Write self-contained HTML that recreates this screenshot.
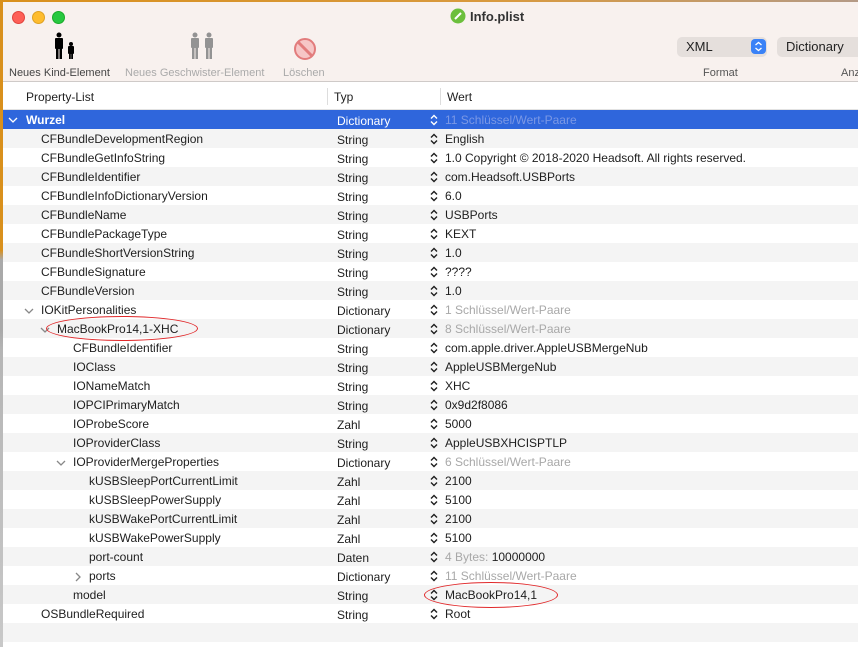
<!DOCTYPE html>
<html><head><meta charset="utf-8"><style>
*{margin:0;padding:0;box-sizing:border-box}
body{width:858px;height:647px;overflow:hidden;font-family:"Liberation Sans",Helvetica,Arial,sans-serif;font-size:12px;color:#1e1e1e;background:#fff;position:relative}
.edge{position:absolute;left:0;top:0;width:3px;height:647px;background:linear-gradient(#d9901c 0,#d9901c 250px,#a9a9a9 260px,#a9a9a9 330px,#b5b5b5 350px,#c8c8c8 647px)}
.topedge{position:absolute;left:0;top:0;width:858px;height:2px;background:linear-gradient(90deg,#d9901c,#d89a40 60%,#b49a86)}
.tb{position:absolute;left:3px;top:2px;width:855px;height:80px;background:#f8f1ee;border-bottom:1px solid #cfcac8}
.light{position:absolute;top:9px;width:13px;height:13px;border-radius:50%}
.title{position:absolute;top:7px;font-weight:bold;font-size:13px;color:#333}
.tl{position:absolute;top:65px;font-size:11px;color:#555}
.pop{position:absolute;top:35px;height:20px;background:#e5dfdc;border-radius:5px;font-size:13px;padding:2px 0 0 9px;color:#222}
.hdr{position:absolute;left:3px;top:83px;width:855px;height:27px;background:#fff;border-bottom:1px solid #e2e2e2}
.hdr span{position:absolute;top:7px;font-size:12px}
.hdr i{position:absolute;top:5px;width:1px;height:17px;background:#ddd}
.rows{position:absolute;left:3px;top:110px;width:855px}
.r{position:relative;height:19px;line-height:19px;white-space:nowrap}
.r:nth-child(even){background:#f4f4f4}
.r.sel{background:#2f66dc;color:#fff;font-weight:bold}
.r .n{position:absolute;top:1px}
.r .t{position:absolute;left:334px;top:2px}
.r .v{position:absolute;left:442px;top:1px}
.r .s{position:absolute;left:427px;top:4px}
.g{color:#a8a8a8}
.sel .g{color:#7b98e5;font-weight:normal}
.sel .t{font-weight:normal}
.ch{position:absolute}
.oval{position:absolute;border:1.5px solid #e0282a;border-radius:50%}
</style></head><body>
<div class="topedge"></div>
<div class="tb">
<div class="light" style="left:9px;background:#fe5f57;border:1px solid #e0443e"></div>
<div class="light" style="left:29px;background:#febc2e;border:1px solid #dea123"></div>
<div class="light" style="left:49px;background:#28c840;border:1px solid #1aab29"></div>
<svg style="position:absolute;left:447px;top:6px" width="16" height="16"><circle cx="8" cy="8" r="7.5" fill="#6cbf3c"/><path d="M5 11 L11 5" stroke="#fff" stroke-width="2"/></svg>
<div class="title" style="left:467px">Info.plist</div>
<svg style="position:absolute;left:47px;top:30px" width="30" height="30" fill="#000"><circle cx="9" cy="3" r="2.5"/><rect x="5" y="6" width="8" height="11" rx="1"/><rect x="6" y="15" width="2.5" height="12"/><rect x="9.5" y="15" width="2.5" height="12"/><circle cx="21" cy="12" r="2"/><rect x="18" y="14" width="6" height="8" rx="1"/><rect x="19" y="20" width="1.8" height="7"/><rect x="21.2" y="20" width="1.8" height="7"/></svg>
<svg style="position:absolute;left:183px;top:30px" width="32" height="30" fill="#939393"><circle cx="9" cy="3" r="2.5"/><rect x="5" y="6" width="8" height="10" rx="1"/><rect x="6" y="14" width="2.5" height="13"/><rect x="9.5" y="14" width="2.5" height="13"/><circle cx="23" cy="3" r="2.5"/><rect x="19" y="6" width="8" height="10" rx="1"/><rect x="20" y="14" width="2.5" height="13"/><rect x="23.5" y="14" width="2.5" height="13"/></svg>
<svg style="position:absolute;left:290px;top:35px" width="24" height="24"><circle cx="12" cy="12" r="10" fill="#f6c6c6" stroke="#e27c7c" stroke-width="2"/><path d="M5.5 5.5 L18.5 18.5" stroke="#e27c7c" stroke-width="3"/></svg>
<div class="tl" style="left:6px;color:#444">Neues Kind-Element</div>
<div class="tl" style="left:122px;color:#aaa">Neues Geschwister-Element</div>
<div class="tl" style="left:280px;color:#aaa">Löschen</div>
<div class="pop" style="left:674px;width:90px">XML<svg style="position:absolute;right:1px;top:2px" width="15" height="15"><rect width="15" height="15" rx="4" fill="#3a82f7"/><path d="M4.5 6 L7.5 3.5 L10.5 6 M4.5 9 L7.5 11.5 L10.5 9" stroke="#fff" stroke-width="1.3" fill="none"/></svg></div>
<div class="pop" style="left:774px;width:90px">Dictionary</div>
<div class="tl" style="left:700px">Format</div>
<div class="tl" style="left:838px">Anz</div>
</div>
<div class="hdr"><span style="left:23px">Property-List</span><i style="left:324px"></i><span style="left:331px">Typ</span><i style="left:437px"></i><span style="left:444px">Wert</span></div>
<svg width="0" height="0" style="position:absolute"><defs>
<symbol id="dn" viewBox="0 0 10 6"><path d="M1 1 L5 5 L9 1" stroke="currentColor" stroke-width="1.3" fill="none"/></symbol>
<symbol id="rt" viewBox="0 0 6 10"><path d="M1 1 L5 5 L1 9" stroke="currentColor" stroke-width="1.3" fill="none"/></symbol>
<symbol id="st" viewBox="0 0 8 12"><path d="M1 4.5 L4 1.5 L7 4.5 M1 7.5 L4 10.5 L7 7.5" stroke="currentColor" stroke-width="1.4" fill="none"/></symbol>
</defs></svg>
<div class="rows">
<div class="r sel"><svg class="ch" style="left:5px;top:7px;color:#fff" width="10" height="6"><use href="#dn"/></svg><span class="n" style="left:23px">Wurzel</span><span class="t">Dictionary</span><svg class="s" style="color:#fff" width="8" height="12"><use href="#st"/></svg><span class="v g">11 Schlüssel/Wert-Paare</span></div>
<div class="r"><span class="n" style="left:38px">CFBundleDevelopmentRegion</span><span class="t">String</span><svg class="s" width="8" height="12"><use href="#st"/></svg><span class="v">English</span></div>
<div class="r"><span class="n" style="left:38px">CFBundleGetInfoString</span><span class="t">String</span><svg class="s" width="8" height="12"><use href="#st"/></svg><span class="v">1.0 Copyright © 2018-2020 Headsoft. All rights reserved.</span></div>
<div class="r"><span class="n" style="left:38px">CFBundleIdentifier</span><span class="t">String</span><svg class="s" width="8" height="12"><use href="#st"/></svg><span class="v">com.Headsoft.USBPorts</span></div>
<div class="r"><span class="n" style="left:38px">CFBundleInfoDictionaryVersion</span><span class="t">String</span><svg class="s" width="8" height="12"><use href="#st"/></svg><span class="v">6.0</span></div>
<div class="r"><span class="n" style="left:38px">CFBundleName</span><span class="t">String</span><svg class="s" width="8" height="12"><use href="#st"/></svg><span class="v">USBPorts</span></div>
<div class="r"><span class="n" style="left:38px">CFBundlePackageType</span><span class="t">String</span><svg class="s" width="8" height="12"><use href="#st"/></svg><span class="v">KEXT</span></div>
<div class="r"><span class="n" style="left:38px">CFBundleShortVersionString</span><span class="t">String</span><svg class="s" width="8" height="12"><use href="#st"/></svg><span class="v">1.0</span></div>
<div class="r"><span class="n" style="left:38px">CFBundleSignature</span><span class="t">String</span><svg class="s" width="8" height="12"><use href="#st"/></svg><span class="v">????</span></div>
<div class="r"><span class="n" style="left:38px">CFBundleVersion</span><span class="t">String</span><svg class="s" width="8" height="12"><use href="#st"/></svg><span class="v">1.0</span></div>
<div class="r"><svg class="ch" style="left:21px;top:8px;color:#888" width="10" height="6"><use href="#dn"/></svg><span class="n" style="left:38px">IOKitPersonalities</span><span class="t">Dictionary</span><svg class="s" width="8" height="12"><use href="#st"/></svg><span class="v g">1 Schlüssel/Wert-Paare</span></div>
<div class="r"><svg class="ch" style="left:37px;top:8px;color:#888" width="10" height="6"><use href="#dn"/></svg><span class="n" style="left:54px">MacBookPro14,1-XHC</span><span class="t">Dictionary</span><svg class="s" width="8" height="12"><use href="#st"/></svg><span class="v g">8 Schlüssel/Wert-Paare</span></div>
<div class="r"><span class="n" style="left:70px">CFBundleIdentifier</span><span class="t">String</span><svg class="s" width="8" height="12"><use href="#st"/></svg><span class="v">com.apple.driver.AppleUSBMergeNub</span></div>
<div class="r"><span class="n" style="left:70px">IOClass</span><span class="t">String</span><svg class="s" width="8" height="12"><use href="#st"/></svg><span class="v">AppleUSBMergeNub</span></div>
<div class="r"><span class="n" style="left:70px">IONameMatch</span><span class="t">String</span><svg class="s" width="8" height="12"><use href="#st"/></svg><span class="v">XHC</span></div>
<div class="r"><span class="n" style="left:70px">IOPCIPrimaryMatch</span><span class="t">String</span><svg class="s" width="8" height="12"><use href="#st"/></svg><span class="v">0x9d2f8086</span></div>
<div class="r"><span class="n" style="left:70px">IOProbeScore</span><span class="t">Zahl</span><svg class="s" width="8" height="12"><use href="#st"/></svg><span class="v">5000</span></div>
<div class="r"><span class="n" style="left:70px">IOProviderClass</span><span class="t">String</span><svg class="s" width="8" height="12"><use href="#st"/></svg><span class="v">AppleUSBXHCISPTLP</span></div>
<div class="r"><svg class="ch" style="left:53px;top:8px;color:#888" width="10" height="6"><use href="#dn"/></svg><span class="n" style="left:70px">IOProviderMergeProperties</span><span class="t">Dictionary</span><svg class="s" width="8" height="12"><use href="#st"/></svg><span class="v g">6 Schlüssel/Wert-Paare</span></div>
<div class="r"><span class="n" style="left:86px">kUSBSleepPortCurrentLimit</span><span class="t">Zahl</span><svg class="s" width="8" height="12"><use href="#st"/></svg><span class="v">2100</span></div>
<div class="r"><span class="n" style="left:86px">kUSBSleepPowerSupply</span><span class="t">Zahl</span><svg class="s" width="8" height="12"><use href="#st"/></svg><span class="v">5100</span></div>
<div class="r"><span class="n" style="left:86px">kUSBWakePortCurrentLimit</span><span class="t">Zahl</span><svg class="s" width="8" height="12"><use href="#st"/></svg><span class="v">2100</span></div>
<div class="r"><span class="n" style="left:86px">kUSBWakePowerSupply</span><span class="t">Zahl</span><svg class="s" width="8" height="12"><use href="#st"/></svg><span class="v">5100</span></div>
<div class="r"><span class="n" style="left:86px">port-count</span><span class="t">Daten</span><svg class="s" width="8" height="12"><use href="#st"/></svg><span class="v"><span class="g">4 Bytes:</span> 10000000</span></div>
<div class="r"><svg class="ch" style="left:72px;top:6px;color:#888" width="6" height="10"><use href="#rt"/></svg><span class="n" style="left:86px">ports</span><span class="t">Dictionary</span><svg class="s" width="8" height="12"><use href="#st"/></svg><span class="v g">11 Schlüssel/Wert-Paare</span></div>
<div class="r"><span class="n" style="left:70px">model</span><span class="t">String</span><svg class="s" width="8" height="12"><use href="#st"/></svg><span class="v">MacBookPro14,1</span></div>
<div class="r"><span class="n" style="left:38px">OSBundleRequired</span><span class="t">String</span><svg class="s" width="8" height="12"><use href="#st"/></svg><span class="v">Root</span></div>
<div class="r"></div>
<div class="r"></div>
</div>
<div class="oval" style="left:46px;top:316px;width:152px;height:25px"></div>
<div class="oval" style="left:424px;top:582px;width:134px;height:26px"></div>
<div class="edge"></div>
</body></html>
